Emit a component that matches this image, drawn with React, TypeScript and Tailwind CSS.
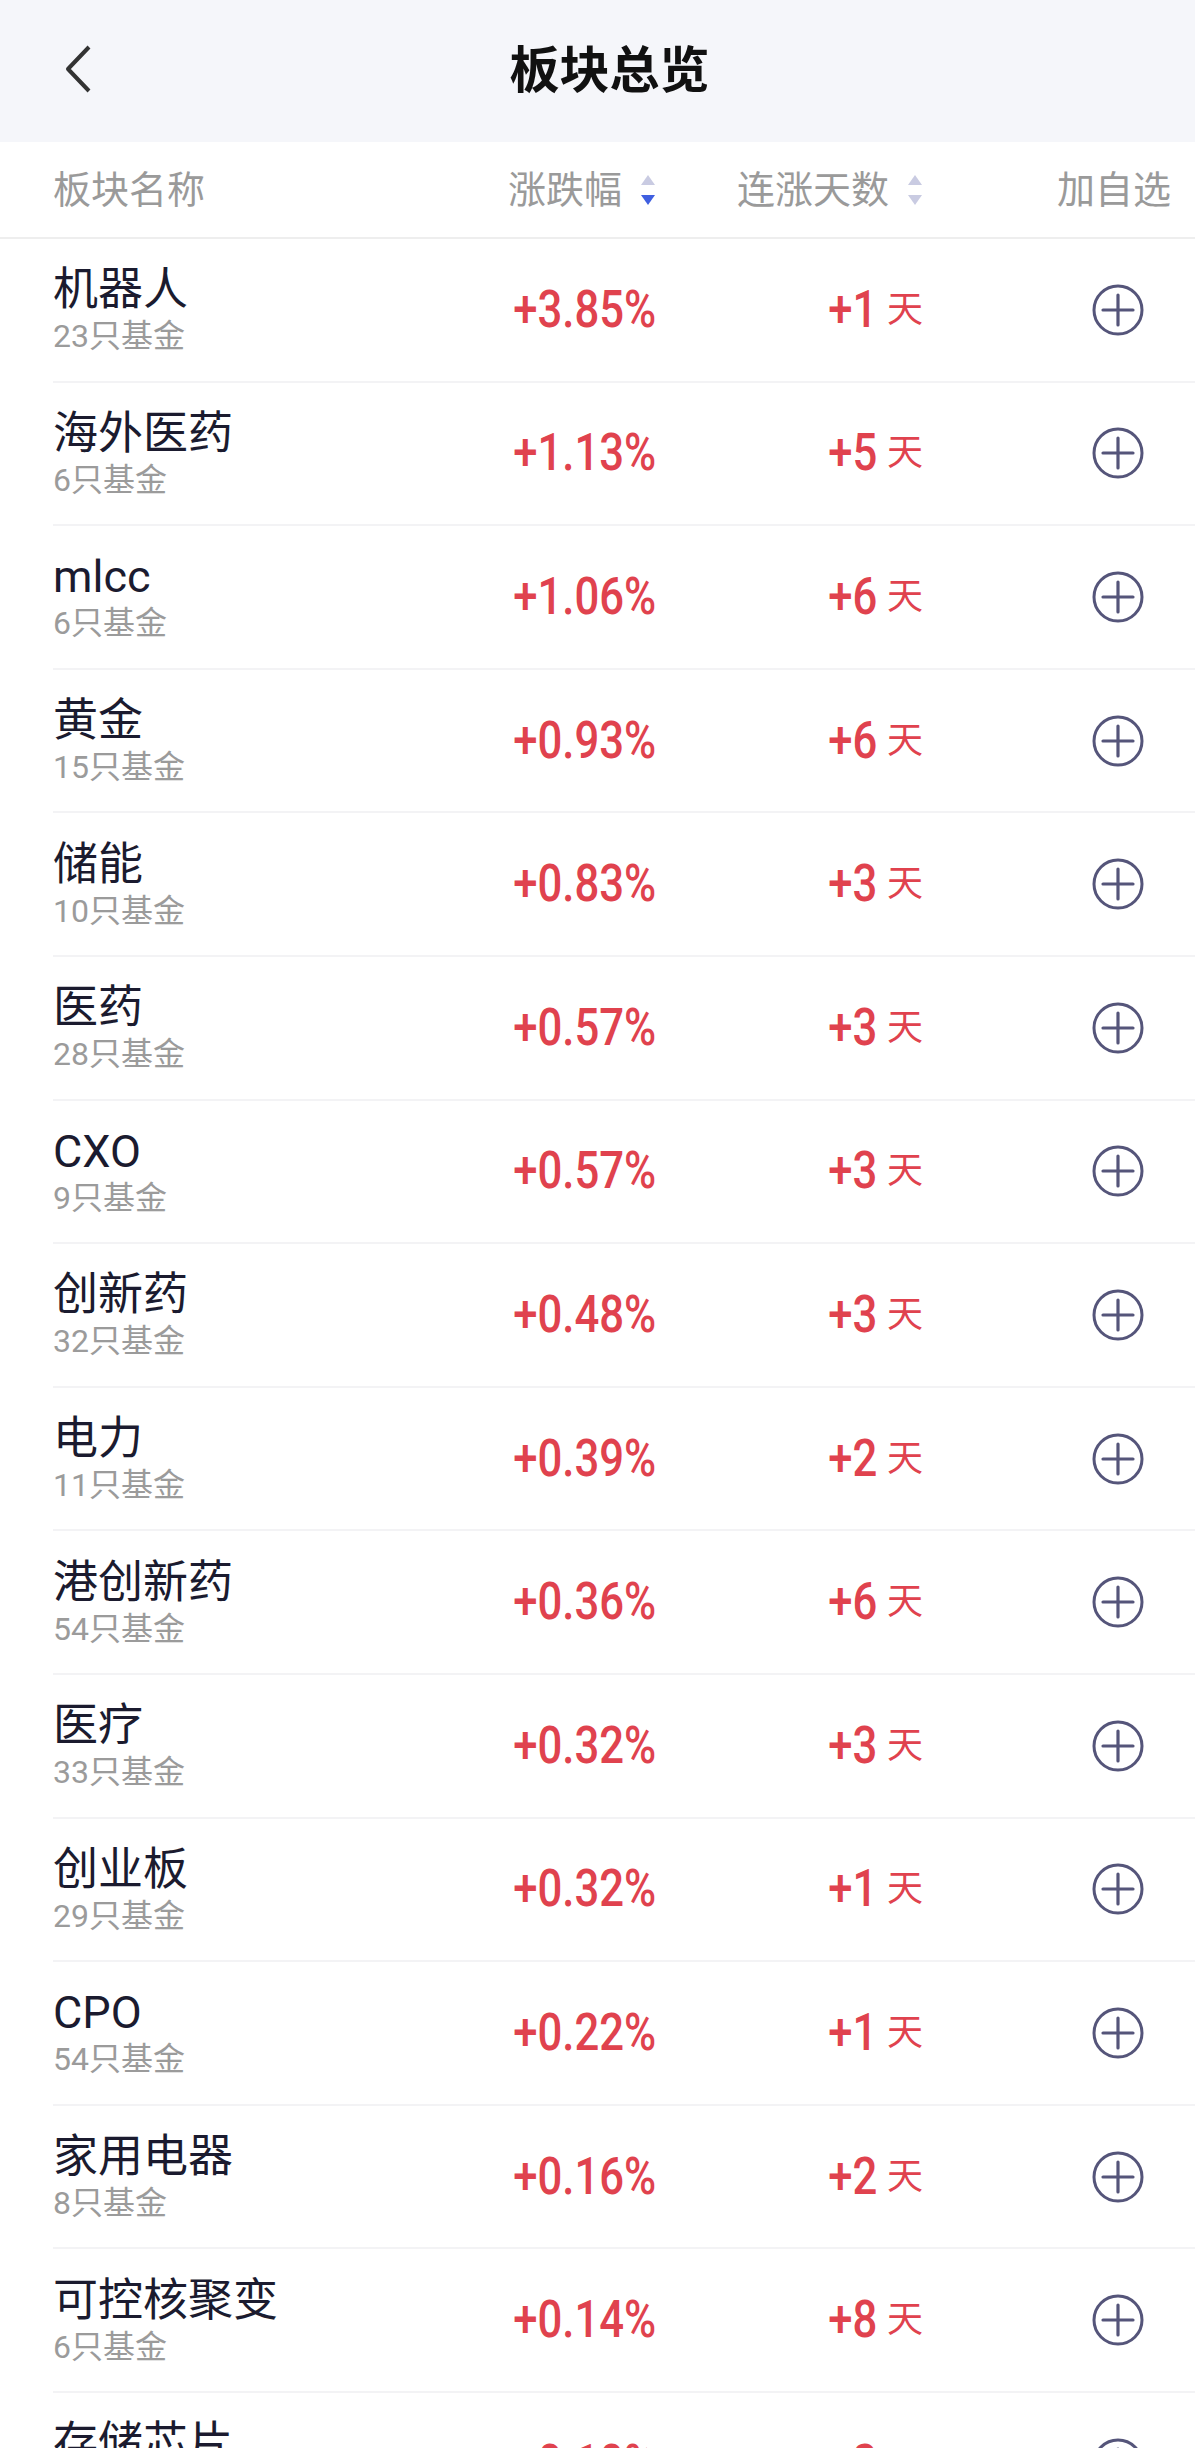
import React from "react";

type Sector = {
  name: string;
  funds: number;
  change: string;
  days: number;
};

const sectors: Sector[] = [
  { name: "机器人", funds: 23, change: "+3.85%", days: 1 },
  { name: "海外医药", funds: 6, change: "+1.13%", days: 5 },
  { name: "mlcc", funds: 6, change: "+1.06%", days: 6 },
  { name: "黄金", funds: 15, change: "+0.93%", days: 6 },
  { name: "储能", funds: 10, change: "+0.83%", days: 3 },
  { name: "医药", funds: 28, change: "+0.57%", days: 3 },
  { name: "CXO", funds: 9, change: "+0.57%", days: 3 },
  { name: "创新药", funds: 32, change: "+0.48%", days: 3 },
  { name: "电力", funds: 11, change: "+0.39%", days: 2 },
  { name: "港创新药", funds: 54, change: "+0.36%", days: 6 },
  { name: "医疗", funds: 33, change: "+0.32%", days: 3 },
  { name: "创业板", funds: 29, change: "+0.32%", days: 1 },
  { name: "CPO", funds: 54, change: "+0.22%", days: 1 },
  { name: "家用电器", funds: 8, change: "+0.16%", days: 2 },
  { name: "可控核聚变", funds: 6, change: "+0.14%", days: 8 },
  { name: "存储芯片", funds: 12, change: "+0.10%", days: 2 },
];

const cjk = "font-['Roboto','Noto_Sans_CJK_SC',sans-serif]";

function SortIcon({ active }: { active?: boolean }) {
  return (
    <svg width="16" height="36" viewBox="0 0 16 36" className="ml-[18px]">
      <path d="M8 3 L15 13 L1 13 Z" fill="#c9cbe2" />
      <path d="M1 23 L15 23 L8 33 Z" fill={active ? "#3f5fe0" : "#c9cbe2"} />
    </svg>
  );
}

function PlusCircle() {
  return (
    <svg width="56" height="56" viewBox="0 0 56 56">
      <circle cx="28" cy="28" r="24" fill="none" stroke="#55557a" strokeWidth="3" />
      <path d="M13 28 H43 M28 13 V43" stroke="#55557a" strokeWidth="3.2" strokeLinecap="round" />
    </svg>
  );
}

function Row({ item }: { item: Sector }) {
  return (
    <div className="pl-[53px]">
      <div className="flex h-[143.6px] items-center border-b-2 border-[#f3f3f5] pr-[49px]">
        <div className="flex flex-1 flex-col">
          <div className={`${cjk} text-[45px] leading-none text-[#1b1b2f]`}>{item.name}</div>
          <div className={`${cjk} mt-[8px] text-[32px] leading-none text-[#9b9b9b]`}>
            {item.funds}只基金
          </div>
        </div>
        <div className="flex w-[200px] justify-end">
          <span
            className={`${cjk} inline-block origin-right scale-x-[0.84] text-[52px] font-medium leading-none text-[#e0424e]`}
          >
            {item.change}
          </span>
        </div>
        <div className="flex w-[267px] items-center justify-end">
          <span
            className={`${cjk} inline-block origin-right scale-x-[0.84] text-[52px] font-medium leading-none text-[#e0424e]`}
          >
            +{item.days}
          </span>
          <span className={`${cjk} ml-[10px] text-[36px] leading-none text-[#e0424e]`}>天</span>
        </div>
        <div className="flex w-[223px] justify-end">
          <PlusCircle />
        </div>
      </div>
    </div>
  );
}

export default function App() {
  return (
    <div className="h-[2448px] w-[1195px] overflow-hidden bg-white">
      <div className="relative flex h-[142px] items-center justify-center bg-[#f5f6fa]">
        <svg
          width="30"
          height="50"
          viewBox="0 0 30 50"
          className="absolute left-[63px] top-[44px]"
        >
          <path d="M26 3 L5 25 L26 47" fill="none" stroke="#333" strokeWidth="4" strokeLinejoin="round" />
        </svg>
        <div className={`${cjk} ml-[24px] text-[50px] font-semibold leading-none text-[#111]`}>板块总览</div>
      </div>
      <div className="flex h-[97px] items-center border-b-2 border-[#eeeeee] pl-[53px] pr-[24px]">
        <div className={`${cjk} flex-1 text-[38px] leading-none text-[#9a9a9a]`}>板块名称</div>
        <div className="flex w-[200px] items-center justify-end">
          <span className={`${cjk} text-[38px] leading-none text-[#9a9a9a]`}>涨跌幅</span>
          <SortIcon active />
        </div>
        <div className="flex w-[267px] items-center justify-end">
          <span className={`${cjk} text-[38px] leading-none text-[#9a9a9a]`}>连涨天数</span>
          <SortIcon />
        </div>
        <div className={`${cjk} w-[248px] text-right text-[38px] leading-none text-[#9a9a9a]`}>加自选</div>
      </div>
      {sectors.map((item) => (
        <Row key={item.name} item={item} />
      ))}
    </div>
  );
}
